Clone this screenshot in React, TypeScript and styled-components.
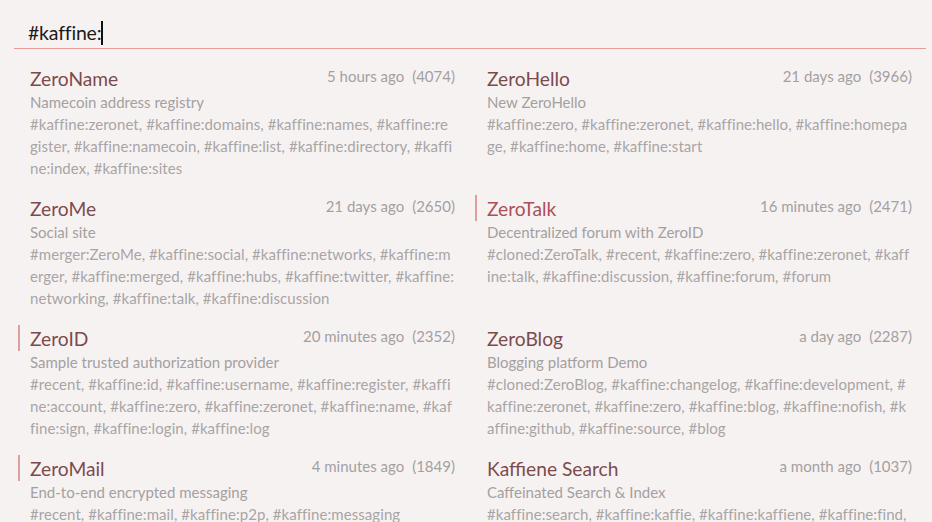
import React from "react";
import styled, { createGlobalStyle } from "styled-components";

const Global = createGlobalStyle`
  html, body { margin: 0; padding: 0; overflow: hidden; background: #f7f2f2; }
  body { font-family: "Lato", "Noto Sans", sans-serif; }
`;

const Page = styled.div`
  width: 932px;
  height: 522px;
  overflow: hidden;
  background: #f7f2f2;
  padding: 0 0 0 14px;
  box-sizing: border-box;
`;

const SearchBar = styled.div`
  width: 912px;
  box-sizing: border-box;
  padding: 20px 14px 2px;
  height: 49px;
  line-height: 26px;
  font-size: 19.5px;
  letter-spacing: -0.2px;
  color: #1a1a1a;
  border-bottom: 1px solid #e79b96;
  display: flex;
  align-items: center;
`;

const Caret = styled.span`
  display: inline-block;
  width: 2px;
  height: 24px;
  background: #111;
`;

const Grid = styled.div`
  margin-top: 16px;
  margin-left: 4px;
  display: grid;
  grid-template-columns: 457px 457px;
  row-gap: 16px;
`;

const Item = styled.div<{ $recent?: boolean }>`
  position: relative;
  padding: 0 20px 0 12px;
  box-sizing: border-box;
  &::before {
    content: "";
    position: absolute;
    left: 0;
    top: 0;
    width: 2px;
    height: 26px;
    background: ${(p) => (p.$recent ? "#dc9e9e" : "transparent")};
  }
`;

const Header = styled.div`
  display: flex;
  justify-content: space-between;
  align-items: flex-start;
  height: 26px;
`;

const Title = styled.span<{ $active?: boolean }>`
  font-size: 19.2px;
  line-height: 25px;
  padding-top: 1px;
  color: ${(p) => (p.$active ? "#ac5057" : "#7b4b4c")};
`;

const Meta = styled.span`
  font-size: 15px;
  line-height: 22px;
  color: #a3a0a0;
  white-space: nowrap;
`;

const Count = styled.span`
  margin-left: 8px;
`;

const Desc = styled.div`
  font-size: 15px;
  line-height: 22px;
  color: #a3a0a0;
`;

const Tags = styled.div`
  font-size: 15px;
  line-height: 22px;
  letter-spacing: 0.07px;
  color: #a8a5a5;
  word-break: break-all;
`;

type Site = {
  title: string;
  time: string;
  count: number;
  desc: string;
  tags: string;
  recent?: boolean;
  active?: boolean;
};

const sites: Site[] = [
  {
    title: "ZeroName",
    time: "5 hours ago",
    count: 4074,
    desc: "Namecoin address registry",
    tags: "#kaffine:zeronet, #kaffine:domains, #kaffine:names, #kaffine:register, #kaffine:namecoin, #kaffine:list, #kaffine:directory, #kaffine:index, #kaffine:sites",
  },
  {
    title: "ZeroHello",
    time: "21 days ago",
    count: 3966,
    desc: "New ZeroHello",
    tags: "#kaffine:zero, #kaffine:zeronet, #kaffine:hello, #kaffine:homepage, #kaffine:home, #kaffine:start",
  },
  {
    title: "ZeroMe",
    time: "21 days ago",
    count: 2650,
    desc: "Social site",
    tags: "#merger:ZeroMe, #kaffine:social, #kaffine:networks, #kaffine:merger, #kaffine:merged, #kaffine:hubs, #kaffine:twitter, #kaffine:networking, #kaffine:talk, #kaffine:discussion",
  },
  {
    title: "ZeroTalk",
    time: "16 minutes ago",
    count: 2471,
    desc: "Decentralized forum with ZeroID",
    tags: "#cloned:ZeroTalk, #recent, #kaffine:zero, #kaffine:zeronet, #kaffine:talk, #kaffine:discussion, #kaffine:forum, #forum",
    recent: true,
    active: true,
  },
  {
    title: "ZeroID",
    time: "20 minutes ago",
    count: 2352,
    desc: "Sample trusted authorization provider",
    tags: "#recent, #kaffine:id, #kaffine:username, #kaffine:register, #kaffine:account, #kaffine:zero, #kaffine:zeronet, #kaffine:name, #kaffine:sign, #kaffine:login, #kaffine:log",
    recent: true,
  },
  {
    title: "ZeroBlog",
    time: "a day ago",
    count: 2287,
    desc: "Blogging platform Demo",
    tags: "#cloned:ZeroBlog, #kaffine:changelog, #kaffine:development, #kaffine:zeronet, #kaffine:zero, #kaffine:blog, #kaffine:nofish, #kaffine:github, #kaffine:source, #blog",
  },
  {
    title: "ZeroMail",
    time: "4 minutes ago",
    count: 1849,
    desc: "End-to-end encrypted messaging",
    tags: "#recent, #kaffine:mail, #kaffine:p2p, #kaffine:messaging",
    recent: true,
  },
  {
    title: "Kaffiene Search",
    time: "a month ago",
    count: 1037,
    desc: "Caffeinated Search & Index",
    tags: "#kaffine:search, #kaffine:kaffie, #kaffine:kaffiene, #kaffine:find, #kaffine:index, #kaffine:engine",
  },
];

export default function App() {
  return (
    <Page>
      <Global />
      <SearchBar>
        #kaffine:
        <Caret />
      </SearchBar>
      <Grid>
        {sites.map((s) => (
          <Item key={s.title} $recent={s.recent}>
            <Header>
              <Title $active={s.active}>{s.title}</Title>
              <Meta>
                {s.time}
                <Count>({s.count})</Count>
              </Meta>
            </Header>
            <Desc>{s.desc}</Desc>
            <Tags>{s.tags}</Tags>
          </Item>
        ))}
      </Grid>
    </Page>
  );
}
